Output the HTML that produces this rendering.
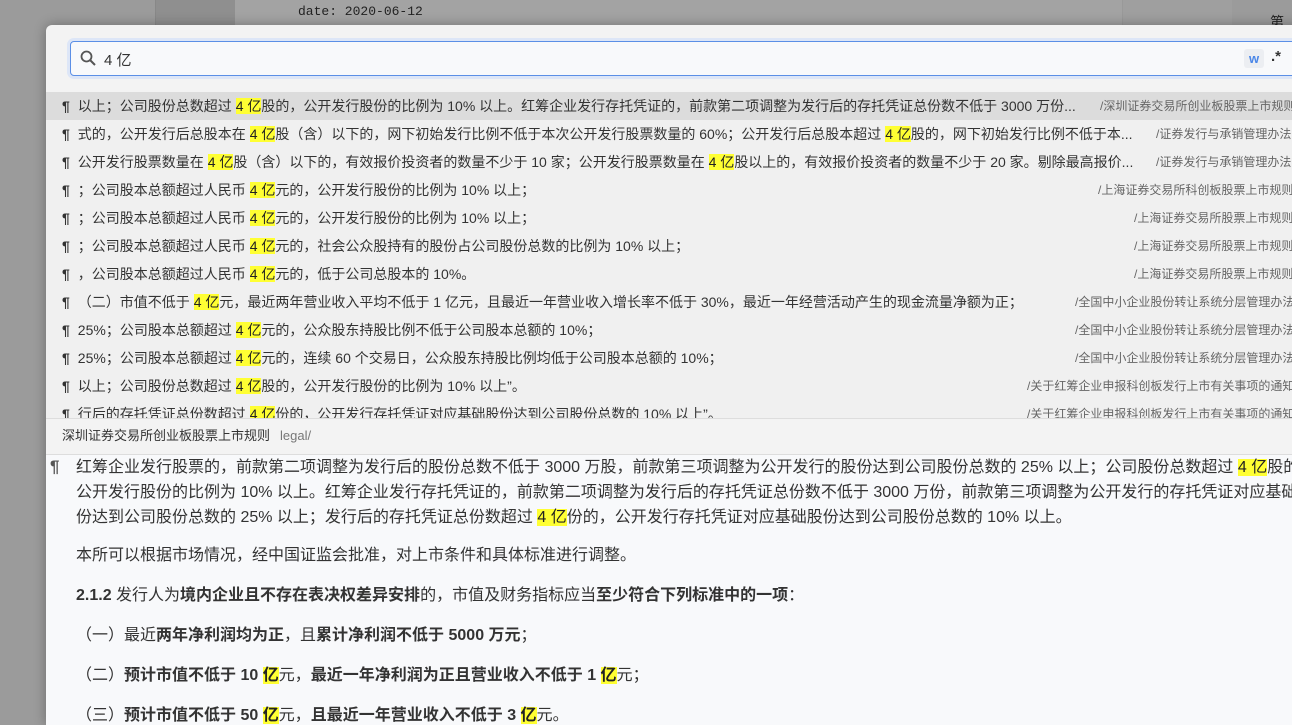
<!DOCTYPE html>
<html><head><meta charset="utf-8"><style>
*{margin:0;padding:0;box-sizing:border-box}
body{width:1292px;height:716px;overflow:hidden;position:relative;background:#9b9b9b;font-family:"Liberation Sans","Noto Sans CJK SC",sans-serif;color:#333}
.bg1{position:absolute;left:155px;top:0;width:80px;height:716px;background:#8f8f8f;border-left:1px solid #888}
.bg2{position:absolute;left:235px;top:0;width:887px;height:25px;background:#a3a3a3}
.bg3{position:absolute;left:1122px;top:0;width:110px;height:25px;background:#9f9f9f;border-left:1px solid #999}
.date{position:absolute;left:298px;top:4px;font:13px "Liberation Mono",monospace;color:#222}
.modal{position:absolute;left:46px;top:25px;width:1260px;height:700px;background:#f3f3f3;border-radius:6px 0 0 0;box-shadow:0 0 12px rgba(0,0,0,.3);overflow:hidden}
.inp{position:absolute;left:24px;top:16px;width:1250px;height:35px;border:1.5px solid #5b8fe6;border-radius:4px;background:#f8f9fb;box-shadow:0 0 0 3px #dde6f7}
.inp .t{position:absolute;left:33px;top:7px;font-size:15px;color:#333}
.w{position:absolute;left:1198px;top:24px;width:20px;height:19px;background:#eceef2;border-radius:3px;color:#4a86e8;font:bold 13px "Liberation Sans";text-align:center;line-height:19px}
.star{position:absolute;left:1225px;top:23px;font:bold 15px "Liberation Sans";color:#333}
.list{position:absolute;left:0;top:67px;width:1260px;height:326px;overflow:hidden}
.row{position:relative;height:28px;line-height:28px;font-size:14px;padding-left:16px;white-space:nowrap;background:#f0f0f0}
.row.sel{background:#dcdcdc}
.row b{font-weight:bold;margin-right:8px}
.row .p{position:absolute;top:0;font-size:12px;color:#666;background:inherit}
mark{background:#ffff33;color:#222}
.hdr{position:absolute;left:0;top:393px;width:1260px;height:37px;border-top:1px solid #ddd;border-bottom:1px solid #ddd;background:#f3f3f3;font-size:13px;line-height:34px;padding-left:16px;color:#333}
.hdr span{color:#777;margin-left:10px}
.doc{position:absolute;left:0;top:430px;width:1260px;height:300px;background:#f8f9fb;font-size:16px;color:#333;white-space:nowrap}
.doc p{position:absolute;left:30px}
.pil{position:absolute;left:4px;top:2px;font-size:17px;font-weight:bold;color:#555}
</style></head><body>
<div class="bg1"></div><div class="bg2"></div><div class="bg3"></div>
<div class="date">date: 2020-06-12</div>
<div style="position:absolute;left:1270px;top:12px;font-size:14px;color:#222">第</div>
<div class="modal">
<div class="inp">
<svg style="position:absolute;left:9px;top:8px" width="16" height="16" viewBox="0 0 16 16"><circle cx="6.5" cy="6.5" r="5" fill="none" stroke="#555" stroke-width="1.8"/><path d="M10 10L15 15" stroke="#555" stroke-width="2"/></svg>
<div class="t">4 亿</div></div>
<div class="w">w</div><div class="star">.*</div>
<div class="list">
<div class="row sel"><b>¶</b>以上；公司股份总数超过 <mark>4 亿</mark>股的，公开发行股份的比例为 10% 以上。红筹企业发行存托凭证的，前款第二项调整为发行后的存托凭证总份数不低于 3000 万份...<span class="p" style="left:1054px">/深圳证券交易所创业板股票上市规则</span></div>
<div class="row"><b>¶</b>式的，公开发行后总股本在 <mark>4 亿</mark>股（含）以下的，网下初始发行比例不低于本次公开发行股票数量的 60%；公开发行后总股本超过 <mark>4 亿</mark>股的，网下初始发行比例不低于本...<span class="p" style="left:1110px">/证券发行与承销管理办法</span></div>
<div class="row"><b>¶</b>公开发行股票数量在 <mark>4 亿</mark>股（含）以下的，有效报价投资者的数量不少于 10 家；公开发行股票数量在 <mark>4 亿</mark>股以上的，有效报价投资者的数量不少于 20 家。剔除最高报价...<span class="p" style="left:1110px">/证券发行与承销管理办法</span></div>
<div class="row"><b>¶</b>；公司股本总额超过人民币 <mark>4 亿</mark>元的，公开发行股份的比例为 10% 以上；<span class="p" style="left:1052px">/上海证券交易所科创板股票上市规则</span></div>
<div class="row"><b>¶</b>；公司股本总额超过人民币 <mark>4 亿</mark>元的，公开发行股份的比例为 10% 以上；<span class="p" style="left:1088px">/上海证券交易所股票上市规则</span></div>
<div class="row"><b>¶</b>；公司股本总额超过人民币 <mark>4 亿</mark>元的，社会公众股持有的股份占公司股份总数的比例为 10% 以上；<span class="p" style="left:1088px">/上海证券交易所股票上市规则</span></div>
<div class="row"><b>¶</b>，公司股本总额超过人民币 <mark>4 亿</mark>元的，低于公司总股本的 10%。<span class="p" style="left:1088px">/上海证券交易所股票上市规则</span></div>
<div class="row"><b>¶</b>（二）市值不低于 <mark>4 亿</mark>元，最近两年营业收入平均不低于 1 亿元，且最近一年营业收入增长率不低于 30%，最近一年经营活动产生的现金流量净额为正；<span class="p" style="left:1029px">/全国中小企业股份转让系统分层管理办法</span></div>
<div class="row"><b>¶</b>25%；公司股本总额超过 <mark>4 亿</mark>元的，公众股东持股比例不低于公司股本总额的 10%；<span class="p" style="left:1029px">/全国中小企业股份转让系统分层管理办法</span></div>
<div class="row"><b>¶</b>25%；公司股本总额超过 <mark>4 亿</mark>元的，连续 60 个交易日，公众股东持股比例均低于公司股本总额的 10%；<span class="p" style="left:1029px">/全国中小企业股份转让系统分层管理办法</span></div>
<div class="row"><b>¶</b>以上；公司股份总数超过 <mark>4 亿</mark>股的，公开发行股份的比例为 10% 以上”。<span class="p" style="left:981px">/关于红筹企业申报科创板发行上市有关事项的通知</span></div>
<div class="row"><b>¶</b>行后的存托凭证总份数超过 <mark>4 亿</mark>份的，公开发行存托凭证对应基础股份达到公司股份总数的 10% 以上”。<span class="p" style="left:981px">/关于红筹企业申报科创板发行上市有关事项的通知</span></div>
</div>
<div class="hdr">深圳证券交易所创业板股票上市规则<span>legal/</span></div>
<div class="doc">
<div class="pil">¶</div>
<p style="top:0;line-height:25px">红筹企业发行股票的，前款第二项调整为发行后的股份总数不低于 3000 万股，前款第三项调整为公开发行的股份达到公司股份总数的 25% 以上；公司股份总数超过 <mark>4 亿</mark>股的，<br>公开发行股份的比例为 10% 以上。红筹企业发行存托凭证的，前款第二项调整为发行后的存托凭证总份数不低于 3000 万份，前款第三项调整为公开发行的存托凭证对应基础股<br>份达到公司股份总数的 25% 以上；发行后的存托凭证总份数超过 <mark>4 亿</mark>份的，公开发行存托凭证对应基础股份达到公司股份总数的 10% 以上。</p>
<p style="top:88px;line-height:25px">本所可以根据市场情况，经中国证监会批准，对上市条件和具体标准进行调整。</p>
<p style="top:128px;line-height:25px"><b>2.1.2</b> 发行人为<b>境内企业且不存在表决权差异安排</b>的，市值及财务指标应当<b>至少符合下列标准中的一项</b>：</p>
<p style="top:168px;line-height:25px">（一）最近<b>两年净利润均为正</b>，且<b>累计净利润不低于 5000 万元</b>；</p>
<p style="top:208px;line-height:25px">（二）<b>预计市值不低于 10 <mark>亿</mark></b>元，<b>最近一年净利润为正且营业收入不低于 1 <mark>亿</mark></b>元；</p>
<p style="top:248px;line-height:25px">（三）<b>预计市值不低于 50 <mark>亿</mark></b>元，<b>且最近一年营业收入不低于 3 <mark>亿</mark></b>元。</p>
</div>
</div>
</body></html>
